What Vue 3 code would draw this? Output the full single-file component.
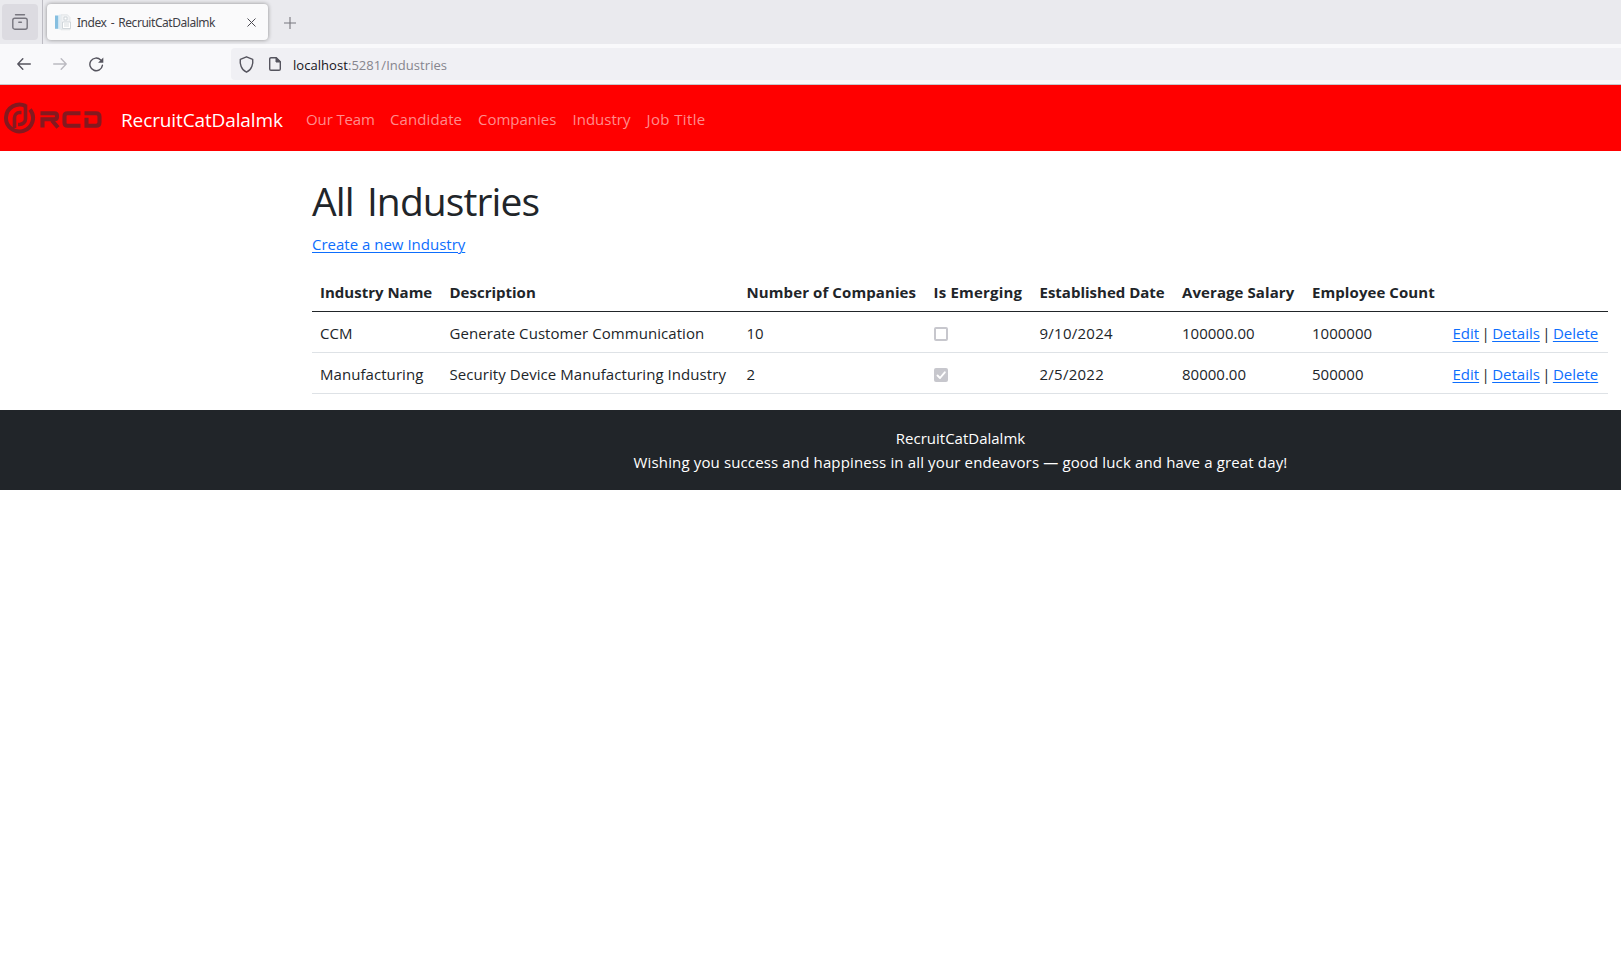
<script setup>
const links = ['Our Team', 'Candidate', 'Companies', 'Industry', 'Job Title']
const columns = [
  { key: 'name', label: 'Industry Name' },
  { key: 'desc', label: 'Description' },
  { key: 'companies', label: 'Number of Companies' },
  { key: 'emerging', label: 'Is Emerging' },
  { key: 'date', label: 'Established Date' },
  { key: 'salary', label: 'Average Salary' },
  { key: 'employees', label: 'Employee Count' },
]
const rows = [
  { name: 'CCM', desc: 'Generate Customer Communication', companies: '10', emerging: false, date: '9/10/2024', salary: '100000.00', employees: '1000000' },
  { name: 'Manufacturing', desc: 'Security Device Manufacturing Industry', companies: '2', emerging: true, date: '2/5/2022', salary: '80000.00', employees: '500000' },
]
</script>

<template>
  <div class="page">
    <div class="tabs">
      <div class="view">
        <svg width="16" height="16" viewBox="0 0 16 16" fill="none" stroke="#77767f" stroke-width="1.4" stroke-linecap="round">
          <path d="M3.5.8h9" /><rect x=".8" y="4.2" width="14.4" height="11" rx="2" /><path d="M6.8 8.3h2.600" />
        </svg>
      </div>
      <div class="tab">
        <svg class="fav" width="17" height="17" viewBox="0 0 17 17">
          <path d="M0 1.500h3.500v13.300H0z" fill="#86bfe0" /><path d="M3.500 1v14l2 .8V.3z" fill="#dcecf5" />
          <path d="M6 .8h6.500L15 3.500v12.300H6z" fill="#f0f2f4" stroke="#dde1e4" stroke-width=".7" />
          <path d="M7.500 8h8v6.500h-8zM9 3h3v3H9z" fill="#fff" stroke="#c7ced3" stroke-width=".8" /><path d="M9 10h5M9 12h5" stroke="#ccd2d6" stroke-width=".8" />
        </svg>
        <span class="tab-title">Index - RecruitCatDalalmk</span>
        <svg class="close" width="9" height="9" viewBox="0 0 9 9" stroke="#4b4a52" stroke-width="1"><path d="M.5.5l8 8M8.500.5l-8 8" /></svg>
      </div>
      <svg class="plus" width="12" height="12" viewBox="0 0 12 12" stroke="#77767e" stroke-width="1.100"><path d="M6 0v12M0 6h12" /></svg>
    </div>

    <div class="toolbar">
      <svg class="back" width="14" height="12" viewBox="0 0 14 12" fill="none" stroke="#55545e" stroke-width="1.400" stroke-linecap="round" stroke-linejoin="round"><path d="M13.300 6H.8M5.800.8L.8 6l5 5.200" /></svg>
      <svg class="forward" width="14" height="12" viewBox="0 0 14 12" fill="none" stroke="#bbbac1" stroke-width="1.400" stroke-linecap="round" stroke-linejoin="round"><path d="M.7 6h12.500M8.200.8l5 5.200-5 5.200" /></svg>
      <svg class="reload" width="15" height="15" viewBox="0 0 15 15"><path d="M13.400 8.300A6.300 6.300 0 1 1 11.700 3" fill="none" stroke="#55545e" stroke-width="1.400" stroke-linecap="round" /><path d="M14.300.6v5.200H9.100z" fill="#55545e" /></svg>
      <div class="address">
        <svg class="shield" width="15" height="17" viewBox="0 0 15 17" fill="none" stroke="#55545e" stroke-width="1.400" stroke-linejoin="round"><path d="M7.500.8l6.200 2.600c.6 4.200-.8 10.500-6.200 12.800C2.100 13.900.7 7.600 1.300 3.400z" /></svg>
        <svg class="doc" width="12" height="14" viewBox="0 0 12 14"><path d="M7.300.7H2Q.7.7.7 2v10q0 1.300 1.300 1.300h8q1.300 0 1.300-1.300V4.700z" fill="none" stroke="#55545e" stroke-width="1.400" stroke-linejoin="round" /><path d="M7 .7v4.300h4.300z" fill="#55545e" stroke="#55545e" /></svg>
        <span class="url"><b>localhost</b>:5281/Industries</span>
      </div>
    </div>

    <nav class="nav">
      <svg class="logo" width="100" height="34" viewBox="0 0 100 34" fill="none" stroke="#84191f">
        <path d="M22.500 4.900A13.500 13.500 0 1 0 27 8.500" stroke-width="4" />
        <path d="M22.500 3.500V18a6 5.500 0 0 1-6 5.500h-1.500M18.500 11.500h-2a5 5.500 0 0 0-5 5.500v10" stroke-width="3.600" />
        <path d="M37.500 12.200h14q2.500 0 2.500 2.500v1q0 2.500-2.500 2.500H39.500v8.300M49 19.500l6 7M77.500 12.200H64.500q-3 0-3 3v6.500q0 3 3 3h13M81.500 12.200h11.500q3.500 0 3.500 3.500v5.500q0 3.500-3.500 3.500h-9.500v-8" stroke-width="4.100" />
      </svg>
      <a class="brand">RecruitCatDalalmk</a>
      <a v-for="(l, i) in links" :key="l" class="nav-link" :class="'n' + i">{{ l }}</a>
    </nav>

    <main class="main">
      <h1>All Industries</h1>
      <p><a class="link create">Create a new Industry</a></p>
      <table>
        <colgroup>
          <col v-for="c in columns" :key="c.key" :class="'c-' + c.key" /><col class="c-actions" />
        </colgroup>
        <thead>
          <tr><th v-for="c in columns" :key="c.key" :class="'h-' + c.key">{{ c.label }}</th><th></th></tr>
        </thead>
        <tbody>
          <tr v-for="r in rows" :key="r.name">
            <td v-for="c in columns" :key="c.key" :class="'d-' + c.key">
              <span v-if="c.key === 'emerging'" class="check" :class="{ on: r.emerging }">
                <svg v-if="r.emerging" width="14" height="14" viewBox="0 0 14 14" fill="none" stroke="#fff" stroke-width="1.900" stroke-linecap="round" stroke-linejoin="round"><path d="M3.500 7.500L6 10l4.800-5.700" /></svg>
              </span>
              <template v-else>{{ r[c.key] }}</template>
            </td>
            <td class="actions"><a class="link">Edit</a><i>|</i><a class="link">Details</a><i>|</i><a class="link">Delete</a></td>
          </tr>
        </tbody>
      </table>
    </main>

    <footer>
      <div>RecruitCatDalalmk</div>
      <div class="wish">Wishing you success and happiness in all your endeavors — good luck and have a great day!</div>
    </footer>
  </div>
</template>

<style>
body { background: #fff; }
</style>

<style scoped>
.page { font: 15px/24px "Open Sans", "Noto Sans", sans-serif; color: #212529; white-space: nowrap; overflow: hidden; }
svg { display: block; flex: none; }
.tabs { height: 44px; background: #eaeaee; display: flex; align-items: flex-start; }
.view { box-sizing: border-box; width: 36px; height: 36px; margin: 4px 4px 0 2px; background: #dcdbe1; border-radius: 4px; display: flex; align-items: center; justify-content: center; }
.tab { box-sizing: border-box; width: 221px; height: 36px; margin: 4px 0 0 5px; background: #fafafb; border-radius: 4px; box-shadow: 0 0 4px rgba(0,0,0,.4); display: flex; align-items: center; padding-left: 8px; position: relative; }
.tab::before { content: ""; position: absolute; left: -5px; top: -4px; width: 1px; height: 44px; background: #bdbcc3; }
.tab-title { font: 12px/20px "Noto Sans", sans-serif; letter-spacing: -.45px; word-spacing: 1.500px; color: #3f3e46; margin: 1px 0 0 5px; width: 170px; }
.plus { margin: 17px 0 0 16px; }
.toolbar { height: 40px; background: #f9f9fb; border-bottom: 1px solid #c8c8cc; display: flex; align-items: center; }
.back { margin-left: 17px; }
.forward { margin-left: 22px; }
.reload { margin-left: 22px; }
.address { box-sizing: border-box; height: 32px; margin-left: 127px; flex: 1; background: #f0f0f4; border-radius: 4px 0 0 4px; display: flex; align-items: center; padding-left: 8px; }
.doc { margin-left: 15px; }
.url { font-size: 13px; letter-spacing: .05px; color: #86858d; margin: 2px 0 0 12px; }
.url b { font-weight: 400; color: #15141a; }
.nav { height: 66px; background: #f00; display: flex; align-items: center; }
.logo { margin-left: 3px; }
.brand { font-size: 19px; letter-spacing: -.12px; color: #fff; width: 162px; margin: 3px 23px 0 18px; }
.nav-link { color: #ff8c8c; margin-top: 2px; }
.n0 { width: 84px; letter-spacing: -.12px; }
.n1 { width: 88px; letter-spacing: .1px; }
.n2 { width: 94.500px; }
.n3 { width: 74px; }
.n4 { letter-spacing: .38px; }
.main { width: 1296px; padding: 27px 0 16px; margin-left: 312px; }
h1 { font-size: 39px; line-height: 46px; font-weight: 400; letter-spacing: -.9px; word-spacing: 4px; margin: 0 0 8px; }
p { margin: 0 0 16px; }
.link { color: #0d6efd; text-decoration: underline; text-underline-offset: 2px; text-decoration-thickness: 1px; }
table { width: 1296px; table-layout: fixed; border-collapse: separate; border-spacing: 0; }
th, td { text-align: left; padding: 9px 8px 7px; height: 24px; border-bottom: 1px solid #dee2e6; }
th { font-weight: 700; padding: 8px 8px 7px; letter-spacing: .08px; border-bottom-color: #212529; }
.h-name, .h-desc, .h-date { letter-spacing: 0; }
.h-companies { letter-spacing: .1px; }
.h-emerging { letter-spacing: .2px; }
.c-name { width: 129.500px; } .c-desc { width: 297px; } .c-companies { width: 187px; } .c-emerging { width: 106px; }
.c-date { width: 142.500px; } .c-salary { width: 130px; } .c-employees { width: 140px; } .c-actions { width: 164px; }
.d-name { letter-spacing: .06px; }
.d-desc { letter-spacing: .06px; }
.d-date { letter-spacing: .25px; }
.check { box-sizing: border-box; display: block; width: 14px; height: 14px; margin-top: 1px; border: 2px solid #c7c7cd; border-radius: 2px; }
.check.on { background: #c7c7cd; border: 0; }
.actions { padding-left: 8.500px; }
.actions i { display: inline-block; width: 13px; font-style: normal; text-align: center; }
footer { background: #212529; color: #fff; height: 48px; padding: 16px 0 16px 300px; text-align: center; }
.wish { letter-spacing: .14px; }
</style>
